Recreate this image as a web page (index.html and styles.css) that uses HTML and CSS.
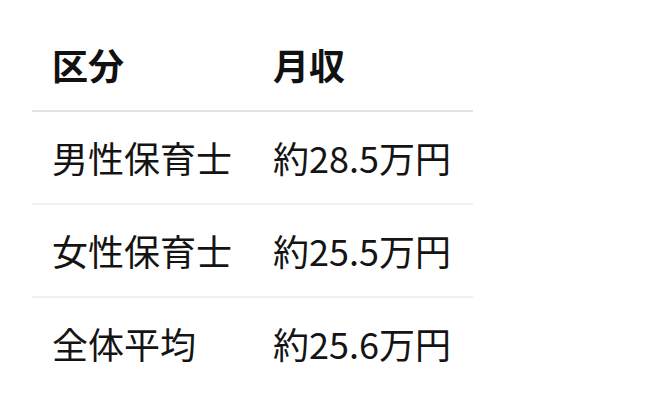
FILE: index.html
```html
<!DOCTYPE html>
<html lang="ja">
<head>
<meta charset="utf-8">
<link rel="stylesheet" href="styles.css">
</head>
<body>
<div class="wrap">
  <table class="salary">
    <thead>
      <tr><th>区分</th><th>月収</th></tr>
    </thead>
    <tbody>
      <tr><td>男性保育士</td><td>約28.5万円</td></tr>
      <tr><td>女性保育士</td><td>約25.5万円</td></tr>
      <tr><td>全体平均</td><td>約25.6万円</td></tr>
    </tbody>
  </table>
</div>
</body>
</html>
```

FILE: styles.css
```css
html, body {
  margin: 0;
  padding: 0;
  background: #ffffff;
}
.wrap {
  padding: 19px 0 0 32px;
}
.salary {
  border-collapse: collapse;
  width: 441px;
  table-layout: fixed;
  font-family: "Noto Sans CJK JP", "Noto Sans", sans-serif;
  font-size: 36px;
  line-height: 54px;
  color: #141414;
}
.salary th,
.salary td {
  text-align: left;
  padding: 18px 20px 19px;
  white-space: nowrap;
}
.salary th {
  font-weight: 700;
  color: #111;
  border-bottom: 2px solid #e2e2e2;
}
.salary td {
  font-weight: 400;
}
.salary tbody tr + tr td {
  border-top: 2px solid #f0f0f0;
}
.salary th:first-child,
.salary td:first-child {
  width: 181px;
}
```
